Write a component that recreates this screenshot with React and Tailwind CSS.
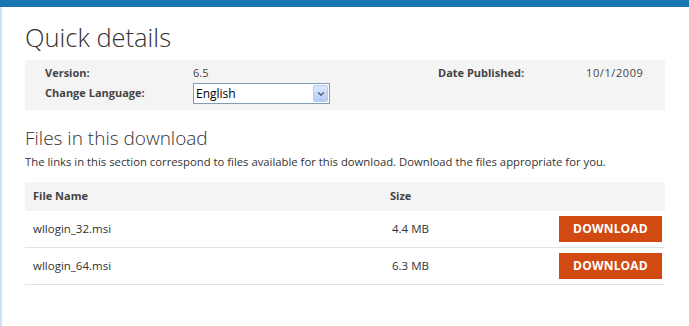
import { ChevronDown } from "lucide-react";

const files = [
  { name: "wllogin_32.msi", size: "4.4 MB" },
  { name: "wllogin_64.msi", size: "6.3 MB" },
];

export default function App() {
  return (
    <div className="min-h-[326px] bg-white font-['Open_Sans',sans-serif] text-[#444]">
      {/* top bar */}
      <div className="h-[7px] bg-[#1a76b0]" />

      <div className="flex min-h-[319px]">
        <div className="w-[2px] bg-[#cde2f4]" />

        <div className="ml-[23px] w-[640px]">
          <h1 className="mt-[11px] h-[38px] text-[25.5px] font-light leading-[38px] text-[#333]">
            Quick details
          </h1>

          {/* info box */}
          <div className="mt-[4px] h-[50px] bg-[#f4f4f4] pl-[20px] pt-[6px] text-[11px]">
            <div className="flex h-[15px] items-center">
              <div className="w-[148px] font-bold">Version:</div>
              <div className="w-[245px]">6.5</div>
              <div className="w-[148px] font-bold">Date Published:</div>
              <div className="tracking-[0.6px]">10/1/2009</div>
            </div>
            <div className="mt-[2px] flex h-[21px] items-center">
              <div className="w-[148px] font-bold">Change Language:</div>
              <div className="flex h-[21px] w-[137px] items-center border border-[#7f9db9] bg-white pl-[2px] pr-[1px] text-[12px] text-black">
                <span className="flex-1">English</span>
                <span className="flex h-[17px] w-[15px] items-center justify-center rounded-[2px] border border-[#b7cbf1] bg-gradient-to-b from-[#dfe9fd] to-[#b5cbf6]">
                  <ChevronDown className="h-[10px] w-[10px] text-[#4d6185]" strokeWidth={3.5} />
                </span>
              </div>
            </div>
          </div>

          <h2 className="mt-[14px] h-[28px] text-[19px] font-light leading-[28px] text-[#333]">
            Files in this download
          </h2>
          <p className="mt-[1px] h-[18px] text-[11.3px] leading-[18px] text-[#333]">
            The links in this section correspond to files available for this
            download. Download the files appropriate for you.
          </p>

          {/* table */}
          <div className="mt-[11px]">
            <div className="flex h-[29px] items-center bg-[#f4f4f4] pl-[8px] text-[11px] font-bold">
              <div className="w-[357px]">File Name</div>
              <div>Size</div>
            </div>
            {files.map((f) => (
              <div
                key={f.name}
                className="flex h-[37px] items-center border-b border-[#e2e2e2] pl-[8px] text-[11.5px] text-[#333]"
              >
                <div className="w-[359px]">{f.name}</div>
                <div className="flex-1">{f.size}</div>
                <button className="mr-[3px] h-[26px] w-[103px] bg-[#d04a12] text-[12px] font-bold tracking-[0.2px] text-white">
                  DOWNLOAD
                </button>
              </div>
            ))}
          </div>
        </div>
      </div>
    </div>
  );
}
